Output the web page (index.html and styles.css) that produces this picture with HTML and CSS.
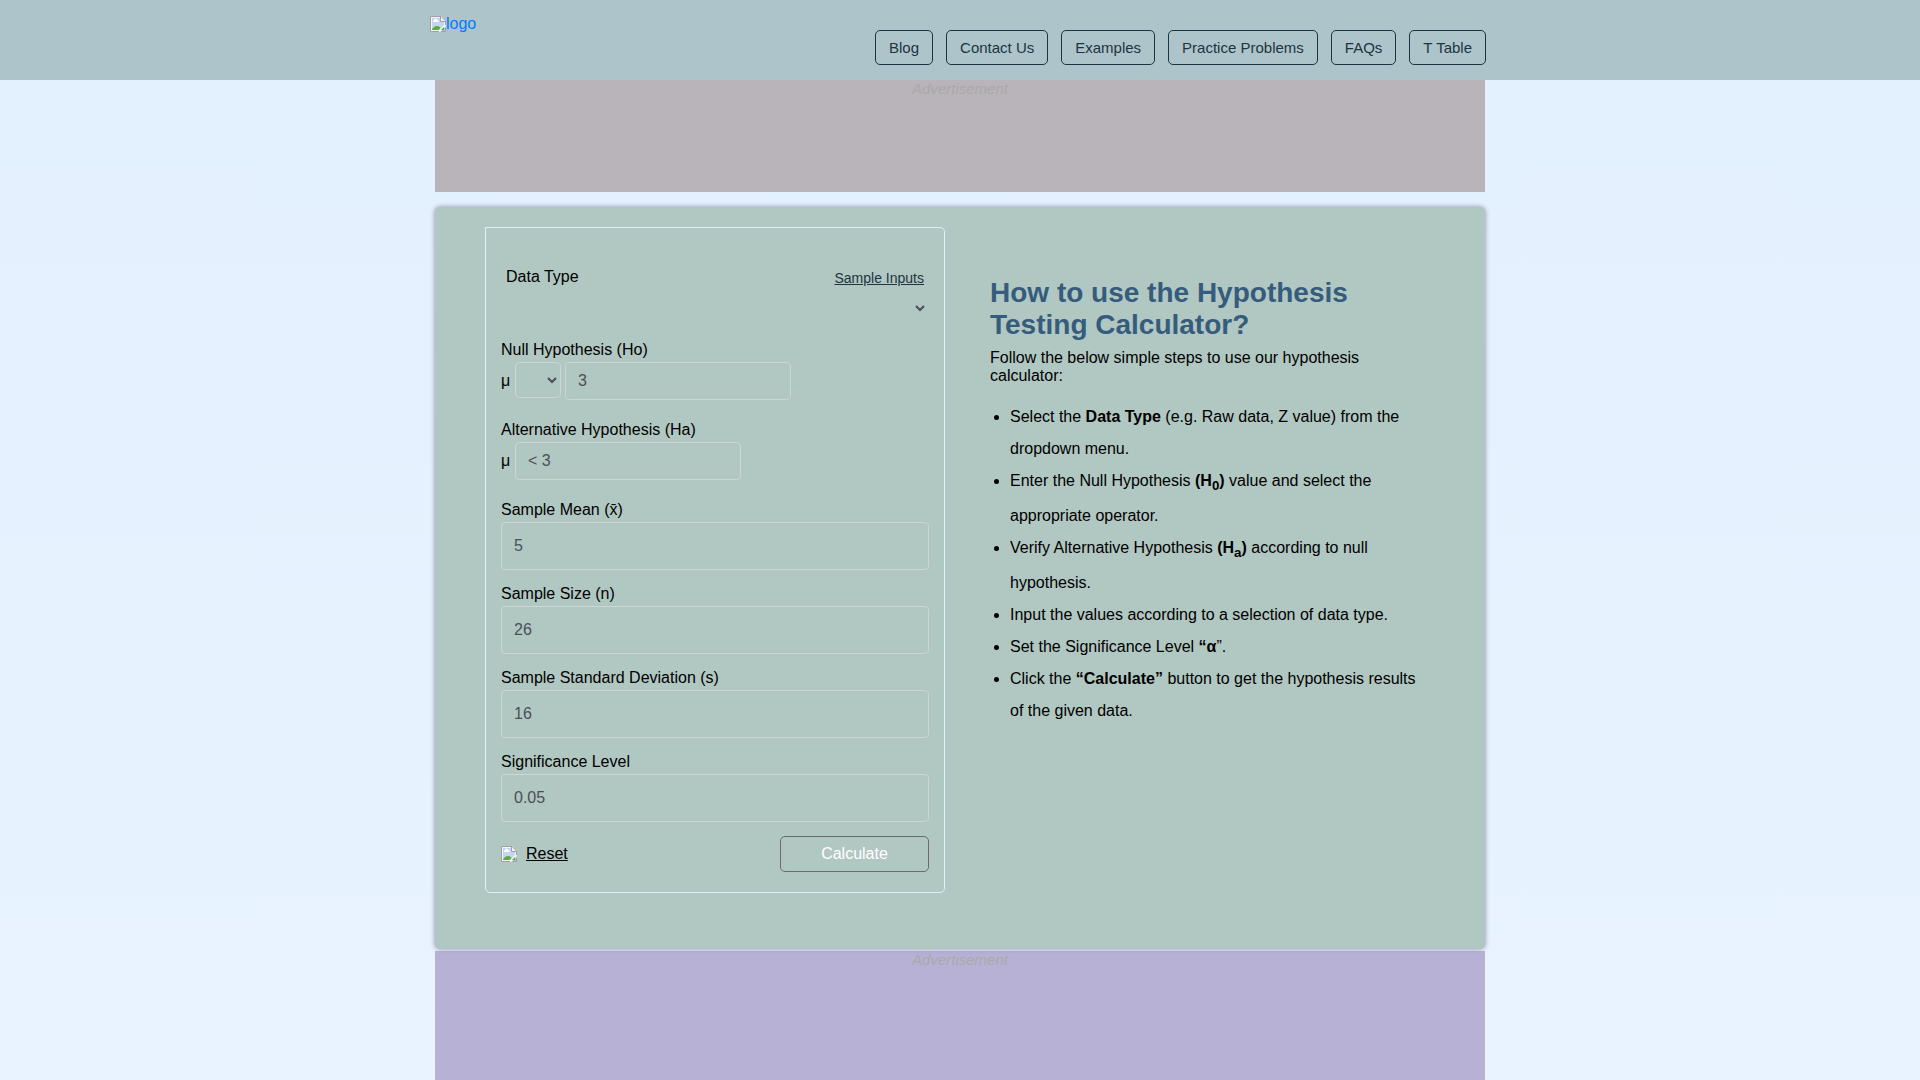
FILE: index.html
```html
<!DOCTYPE html>
<html lang="en">
<head>
<meta charset="utf-8">
<meta name="viewport" content="width=device-width, initial-scale=1">
<title>Hypothesis Testing Calculator</title>
<link rel="stylesheet" href="styles.css">
</head>
<body>
<svg class="sprite" aria-hidden="true">
  <symbol id="missing" viewBox="0 0 16 16">
    <path d="M0 0H11L16 5V10L10 16H0Z" fill="#f4f6fb"/>
    <path d="M2 2H10V6H14V9L9 14H2Z" fill="#c3d4f5"/>
    <path d="M3 6a1.500 1.500 0 0 1 1-2a1.500 1.500 0 0 1 3 0a1 1 0 0 1 1 2Z" fill="#fff"/>
    <path d="M2 14C3 11 5 10 7 10C9 10 10 11 10.500 12L8.500 14Z" fill="#5aad35"/>
    <path d="M11 14L14 11V14Z" fill="#5aad35"/>
    <path d="M9 15.500H.5V.5H11L15.500 5V9M10.500 .5V5.500H15.500M15.500 12V15.500H11.500" fill="none" stroke="#a0a0a0"/>
  </symbol>
</svg>
<header class="header">
  <div class="header-inner">
    <a class="logo" href="#"><svg class="icon"><use href="#missing"/></svg>logo</a>
    <nav class="nav">
      <a href="#">Blog</a>
      <a href="#">Contact Us</a>
      <a href="#">Examples</a>
      <a href="#">Practice Problems</a>
      <a href="#">FAQs</a>
      <a href="#">T Table</a>
    </nav>
  </div>
</header>
<main class="page">
  <aside class="ad ad-top">Advertisement</aside>
  <section class="card">
    <form class="calc">
      <div class="type-row">
        <label for="type">Data Type</label>
        <a href="#">Sample Inputs</a>
      </div>
      <select class="type" id="type"><option></option></select>
      <div class="group">
        <label for="null">Null Hypothesis (Ho)</label>
        <div class="row">
          <span>μ</span>
          <select class="operator" aria-label="Operator"><option></option></select>
          <input class="short" id="null" type="text" value="3">
        </div>
      </div>
      <div class="group">
        <label for="alt">Alternative Hypothesis (Ha)</label>
        <div class="row">
          <span>μ</span>
          <input class="short" id="alt" type="text" value="&lt; 3">
        </div>
      </div>
      <div class="field">
        <label for="mean">Sample Mean (x̄)</label>
        <input id="mean" type="text" value="5">
      </div>
      <div class="field">
        <label for="size">Sample Size (n)</label>
        <input id="size" type="text" value="26">
      </div>
      <div class="field">
        <label for="sd">Sample Standard Deviation (s)</label>
        <input id="sd" type="text" value="16">
      </div>
      <div class="field">
        <label for="level">Significance Level</label>
        <input id="level" type="text" value="0.05">
      </div>
      <div class="actions">
        <svg class="icon"><use href="#missing"/></svg>
        <a class="reset" href="#">Reset</a>
        <button type="button">Calculate</button>
      </div>
    </form>
    <article class="guide">
      <h2>How to use the Hypothesis Testing Calculator?</h2>
      <p>Follow the below simple steps to use our hypothesis calculator:</p>
      <ul>
        <li>Select the <b>Data Type</b> (e.g. Raw data, Z value) from the dropdown menu.</li>
        <li>Enter the Null Hypothesis <b>(H<sub>0</sub>)</b> value and select the appropriate operator.</li>
        <li>Verify Alternative Hypothesis <b>(H<sub>a</sub>)</b> according to null hypothesis.</li>
        <li>Input the values according to a selection of data type.</li>
        <li>Set the Significance Level <b>“α</b>”.</li>
        <li>Click the <b>“Calculate”</b> button to get the hypothesis results of the given data.</li>
      </ul>
    </article>
  </section>
  <aside class="ad ad-bottom">Advertisement</aside>
</main>
</body>
</html>
```
FILE: styles.css
```css
* {
  box-sizing: border-box;
}

body {
  display: flex;
  flex-direction: column;
  min-height: 100vh;
  margin: 0;
  background: linear-gradient(#e3f0fd, #e8f3ff);
  color: #000;
  font: 16px/24px "Liberation Sans", Arial, sans-serif;
}

.sprite {
  display: none;
}

.icon {
  flex: none;
  width: 16px;
  height: 16px;
}

.header {
  background: #adc4ca;
}

.header-inner {
  display: flex;
  justify-content: space-between;
  align-items: flex-start;
  max-width: 1060px;
  min-height: 80px;
  margin: 0 auto;
  padding-right: 4px;
}

.logo {
  display: flex;
  align-items: center;
  padding-top: 12px;
  color: #007bff;
  text-decoration: none;
}

.nav {
  display: flex;
  flex-wrap: wrap;
  gap: 13px;
  padding-top: 30px;
}

.nav a {
  padding: 5px 13px;
  border: 1px solid #1d3442;
  border-radius: 5px;
  color: #1d3442;
  font-size: 15px;
  line-height: 23px;
  text-decoration: none;
}

.page {
  display: flex;
  flex: 1;
  flex-direction: column;
  width: 100%;
  max-width: 1050px;
  margin: 0 auto;
}

.ad {
  color: #a9a9a9;
  font-size: 15px;
  font-style: italic;
  line-height: 18px;
  text-align: center;
}

.ad-top {
  min-height: 112px;
  margin-bottom: 15px;
  background: #b9b4b9;
}

.ad-bottom {
  flex: 1;
  min-height: 120px;
  margin-top: 2px;
  background: #b7b1d6;
}

.card {
  position: relative;
  display: grid;
  grid-template-columns: 460px 1fr;
  gap: 45px;
  padding: 20px 50px 56px;
  border-radius: 5px;
  background: #b1c7c1;
  box-shadow: 0 0 5px #8e86a8;
}

.calc {
  padding: 37px 15px 20px;
  border: 1px solid #e1effe;
  border-radius: 0 5px 5px 5px;
}

.type-row {
  display: flex;
  justify-content: space-between;
  height: 24px;
  padding: 0 5px;
}

.type-row a {
  color: #1d3442;
  font-size: 14px;
  line-height: 26px;
}

label {
  display: block;
}

input,
select {
  border: 1px solid #ced4da;
  border-radius: 4px;
  background: transparent;
  color: #495057;
  font: inherit;
}

input {
  width: 100%;
  height: 48px;
  padding: 0 12px;
}

.type {
  display: block;
  width: 100%;
  height: 38px;
  margin-bottom: 11px;
  border-color: transparent;
}

.group {
  margin-bottom: 18px;
}

.row {
  display: flex;
  align-items: flex-start;
  gap: 4px;
}

.row span {
  width: 10px;
  line-height: 38px;
}

.operator {
  width: 46px;
  height: 36px;
}

.short {
  width: 226px;
  height: 38px;
}

.field {
  margin-bottom: 12px;
}

.actions {
  display: flex;
  align-items: center;
  padding-top: 2px;
}

.reset {
  margin-left: 9px;
  color: #000;
}

button {
  width: 149px;
  height: 36px;
  margin-left: auto;
  border: 1px solid #6b6b6b;
  border-radius: 5px;
  background: transparent;
  color: #fff;
  font: inherit;
}

.guide {
  padding: 50px 15px 0 0;
}

h2 {
  margin: 0 0 8px;
  color: #355c7d;
  font-size: 28px;
  line-height: 32px;
}

p {
  margin: 0 0 16px;
  line-height: 18px;
}

ul {
  margin: 0;
  padding-left: 20px;
  line-height: 2;
}
```
